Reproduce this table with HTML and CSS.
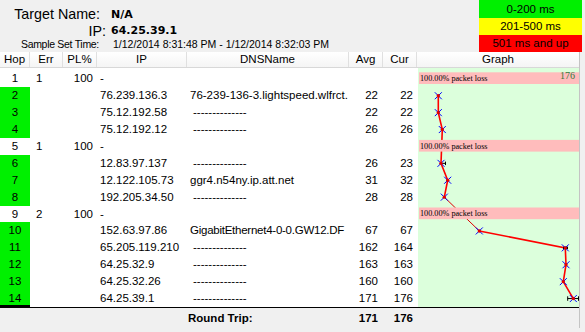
FILE: index.html
```html
<!DOCTYPE html>
<html lang="en">
<head>
<meta charset="utf-8">
<title>Trace</title>
<link rel="stylesheet" href="styles.css">
</head>
<body>
<div class="top">
  <div class="info">
    <span class="lbl big lbl-name">Target Name:</span><span class="val">N/A</span>
    <span class="lbl big">IP:</span><span class="val">64.25.39.1</span>
    <span class="lbl small lbl-time">Sample Set Time:</span><span class="time">1/12/2014 8:31:48 PM - 1/12/2014 8:32:03 PM</span>
  </div>
  <div class="legend">
    <div class="lg lg-green">0-200 ms</div>
    <div class="lg lg-yellow">201-500 ms</div>
    <div class="lg lg-red">501 ms and up</div>
  </div>
</div>

<div class="table">
  <div class="cols thead">
    <div class="th">Hop</div><div class="th">Err</div><div class="th">PL%</div><div class="th">IP</div><div class="th">DNSName</div><div class="th">Avg</div><div class="th">Cur</div><div class="th th-last">Graph</div>
  </div>

  <div class="cols tbody">
    <div class="spacer"></div>
    <svg class="graph" width="162" height="239" viewBox="0 0 162 239">
      <defs>
        <g id="mk">
          <path d="M-3.5,-3.5L3.5,3.5M-3.5,3.5L3.5,-3.5" stroke="#0000ff" stroke-width="1" fill="none"/>
          <circle r="1.7" fill="#e00000"/>
        </g>
      </defs>
      <rect x="1" y="0" width="161" height="239" fill="#dcffdc"/>
      <polyline points="21.3,27.75 21.3,44.65 25.3,61.55 24,95.35 30.7,112.25 27.3,129.15" fill="none" stroke="#ff0000" stroke-width="1.6"/>
      <line x1="27.3" y1="129.15" x2="62.3" y2="162.95" stroke="#e00000" stroke-width="1"/>
      <polyline points="62.3,162.95 148.3,179.85 149,196.75 146.3,213.65 156.3,230.55" fill="none" stroke="#ff0000" stroke-width="1.6"/>

      <rect x="2" y="4.3" width="160" height="11.7" fill="#ffbcbc"/>
      <rect x="2" y="71.9" width="160" height="11.7" fill="#ffbcbc"/>
      <rect x="2" y="139.5" width="160" height="11.7" fill="#ffbcbc"/>
      <text class="pl-txt" x="3" y="13">100.00% packet loss</text>
      <text class="pl-txt" x="3" y="80.6">100.00% packet loss</text>
      <text class="pl-txt" x="3" y="148.2">100.00% packet loss</text>
      <text class="max-txt" x="158" y="11" text-anchor="end">176</text>

      <path d="M24,95.35H28.5M28.5,93.6V97.1" stroke="#000" stroke-width="1" fill="none"/>
      <path d="M146,179.85H151" stroke="#000" stroke-width="2.5" fill="none"/>
      <path d="M150.7,230.55H161.5M150.7,228.3V232.8M161.5,228.3V232.8" stroke="#000" stroke-width="1" fill="none"/>

      <use href="#mk" x="21.3" y="27.75"/>
      <use href="#mk" x="21.3" y="44.65"/>
      <use href="#mk" x="25.3" y="61.55"/>
      <use href="#mk" x="24" y="95.35"/>
      <use href="#mk" x="30.7" y="112.25"/>
      <use href="#mk" x="27.3" y="129.15"/>
      <use href="#mk" x="62.3" y="162.95"/>
      <use href="#mk" x="148.3" y="179.85"/>
      <use href="#mk" x="149" y="196.75"/>
      <use href="#mk" x="146.3" y="213.65"/>
      <use href="#mk" x="156.3" y="230.55"/>
    </svg>

    <div class="c hop">1</div><div class="c err">1</div><div class="c pl">100</div><div class="c ip">-</div><div class="c dns"></div><div class="c num"></div><div class="c num cur"></div>
    <div class="c hop ok">2</div><div class="c err"></div><div class="c pl"></div><div class="c ip">76.239.136.3</div><div class="c dns">76-239-136-3.lightspeed.wlfrct.</div><div class="c num">22</div><div class="c num cur">22</div>
    <div class="c hop ok">3</div><div class="c err"></div><div class="c pl"></div><div class="c ip">75.12.192.58</div><div class="c dns dash">--------------</div><div class="c num">22</div><div class="c num cur">22</div>
    <div class="c hop ok">4</div><div class="c err"></div><div class="c pl"></div><div class="c ip">75.12.192.12</div><div class="c dns dash">--------------</div><div class="c num">26</div><div class="c num cur">26</div>
    <div class="c hop">5</div><div class="c err">1</div><div class="c pl">100</div><div class="c ip">-</div><div class="c dns"></div><div class="c num"></div><div class="c num cur"></div>
    <div class="c hop ok">6</div><div class="c err"></div><div class="c pl"></div><div class="c ip">12.83.97.137</div><div class="c dns dash">--------------</div><div class="c num">26</div><div class="c num cur">23</div>
    <div class="c hop ok">7</div><div class="c err"></div><div class="c pl"></div><div class="c ip">12.122.105.73</div><div class="c dns">ggr4.n54ny.ip.att.net</div><div class="c num">31</div><div class="c num cur">32</div>
    <div class="c hop ok">8</div><div class="c err"></div><div class="c pl"></div><div class="c ip">192.205.34.50</div><div class="c dns dash">--------------</div><div class="c num">28</div><div class="c num cur">28</div>
    <div class="c hop">9</div><div class="c err">2</div><div class="c pl">100</div><div class="c ip">-</div><div class="c dns"></div><div class="c num"></div><div class="c num cur"></div>
    <div class="c hop ok">10</div><div class="c err"></div><div class="c pl"></div><div class="c ip">152.63.97.86</div><div class="c dns tight">GigabitEthernet4-0-0.GW12.DF</div><div class="c num">67</div><div class="c num cur">67</div>
    <div class="c hop ok">11</div><div class="c err"></div><div class="c pl"></div><div class="c ip">65.205.119.210</div><div class="c dns dash">--------------</div><div class="c num">162</div><div class="c num cur">164</div>
    <div class="c hop ok">12</div><div class="c err"></div><div class="c pl"></div><div class="c ip">64.25.32.9</div><div class="c dns dash">--------------</div><div class="c num">163</div><div class="c num cur">163</div>
    <div class="c hop ok">13</div><div class="c err"></div><div class="c pl"></div><div class="c ip">64.25.32.26</div><div class="c dns dash">--------------</div><div class="c num">160</div><div class="c num cur">160</div>
    <div class="c hop ok last">14</div><div class="c err"></div><div class="c pl"></div><div class="c ip">64.25.39.1</div><div class="c dns dash">--------------</div><div class="c num">171</div><div class="c num cur">176</div>
  </div>

  <div class="cols tfoot">
    <div class="rt">Round Trip:</div><div class="num ft-avg">171</div><div class="num cur ft-cur">176</div>
  </div>
</div>
</body>
</html>
```

FILE: styles.css
```css
* { box-sizing: border-box; }
html, body { margin: 0; padding: 0; }
body {
  width: 585px;
  height: 332px;
  overflow: hidden;
  background: #f0f0f0;
  color: #000;
  font-family: "Liberation Sans", Arial, sans-serif;
}

/* ---------- top section ---------- */
.top {
  display: flex;
  justify-content: space-between;
  align-items: flex-start;
  height: 52px;
}
.info {
  display: grid;
  grid-template-columns: 106px auto;
  grid-template-rows: 17px 16px 11px;
  column-gap: 5px;
  padding-top: 6px;
  align-items: center;
  white-space: nowrap;
}
.lbl { justify-self: end; }
.big { font-size: 14.3px; line-height: 17px; }
.small { font-size: 10.5px; line-height: 11px; }
.lbl-name { margin-right: 6px; }
.lbl-time { margin-right: 7px; letter-spacing: -0.3px; }
.val {
  font-family: "DejaVu Sans", Verdana, sans-serif;
  font-weight: bold;
  font-size: 11px;
  line-height: 14px;
}
.time { font-size: 10.5px; line-height: 11px; margin-left: 2px; }

.legend {
  width: 103px;
  margin-right: 3px;
  display: flex;
  flex-direction: column;
}
.lg {
  height: 17px;
  line-height: 17px;
  text-align: center;
  font-size: 11.5px;
}
.lg-green { background: #00f000; height: 18px; line-height: 18px; }
.lg-yellow { background: #ffff00; }
.lg-red { background: #ff0000; }

/* ---------- table ---------- */
.table {
  width: 580px;
  border-right: 1px solid #c4c4c4;
  font-size: 11.5px;
}
.cols {
  display: grid;
  grid-template-columns: 30px 33px 34px 90px 162px 34px 34px 162px;
}
.thead {
  height: 16px;
  background: linear-gradient(#ffffff, #f5f5f5);
  border-bottom: 1px solid #d8d8d8;
}
.th {
  text-align: center;
  line-height: 15px;
  border-right: 1px solid #e0e0e0;
}
.th-last { border-right: none; }

.tbody {
  background: #ffffff;
  grid-template-rows: 2.4px repeat(14, 16.9px);
}
.spacer { grid-column: 1 / 8; grid-row: 1; }
.graph {
  grid-column: 8;
  grid-row: 1 / -1;
  display: block;
}
.pl-txt {
  font-family: "Liberation Serif", "Times New Roman", serif;
  font-size: 8.2px;
  fill: #000;
}
.max-txt {
  font-family: "Liberation Serif", "Times New Roman", serif;
  font-size: 10px;
  fill: #2f7a3a;
}

.c {
  line-height: 16.9px;
  white-space: nowrap;
  overflow: hidden;
}
.hop { text-align: center; }
.ok { background: #00f000; }
.last { box-shadow: inset 0 -2px 0 #000; }
.err { padding-left: 6px; }
.pl { text-align: right; padding-right: 4px; }
.ip { padding-left: 3px; }
.dns { padding-left: 3px; }
.tight { letter-spacing: -0.25px; }
.dash { padding-left: 6px; }
.num { text-align: right; padding-right: 5px; }
.cur { padding-right: 4px; }

.tfoot {
  border-top: 1px solid #000;
  height: 21px;
  line-height: 20px;
  font-weight: bold;
  background: #f0f0f0;
}
.rt { grid-column: 5; padding-left: 1px; }
.ft-avg { grid-column: 6; }
.ft-cur { grid-column: 7; }
```
